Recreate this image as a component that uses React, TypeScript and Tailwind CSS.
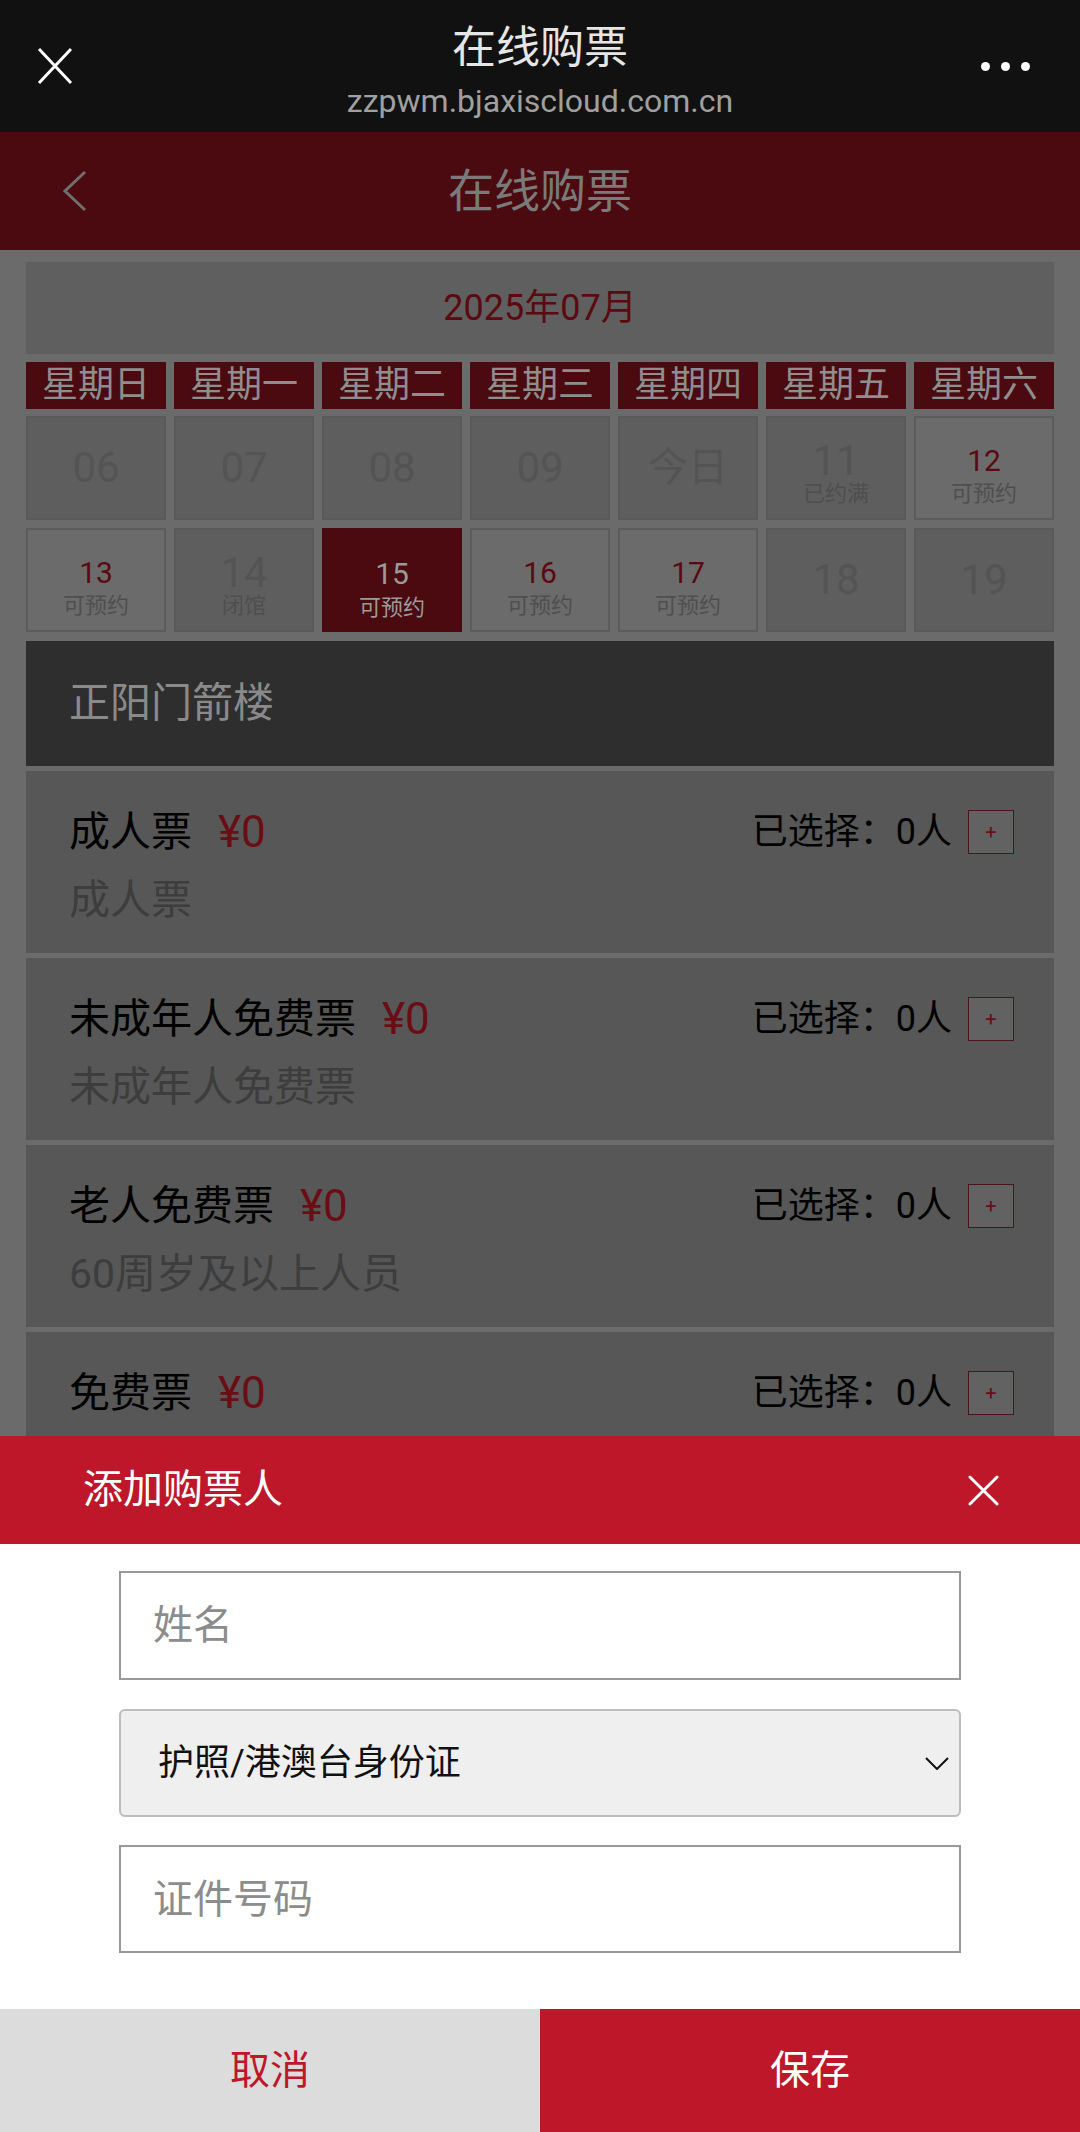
import { ChangeEvent, useState } from "react";

type DayCell = {
  day: string;
  label?: string;
  state: "off" | "open" | "selected";
};

const weekdays = ["星期日", "星期一", "星期二", "星期三", "星期四", "星期五", "星期六"];

const days: DayCell[] = [
  { day: "06", state: "off" },
  { day: "07", state: "off" },
  { day: "08", state: "off" },
  { day: "09", state: "off" },
  { day: "今日", state: "off" },
  { day: "11", label: "已约满", state: "off" },
  { day: "12", label: "可预约", state: "open" },
  { day: "13", label: "可预约", state: "open" },
  { day: "14", label: "闭馆", state: "off" },
  { day: "15", label: "可预约", state: "selected" },
  { day: "16", label: "可预约", state: "open" },
  { day: "17", label: "可预约", state: "open" },
  { day: "18", state: "off" },
  { day: "19", state: "off" },
];

// last row is cut by the sheet, its description never shows
const tickets = [
  { name: "成人票", price: "¥0", desc: "成人票" },
  { name: "未成年人免费票", price: "¥0", desc: "未成年人免费票" },
  { name: "老人免费票", price: "¥0", desc: "60周岁及以上人员" },
  { name: "免费票", price: "¥0", desc: "" },
];

function CloseIcon({ size, stroke }: { size: number; stroke: number }) {
  return (
    <svg width={size} height={size} viewBox="0 0 32 32" fill="none">
      <path d="M2 2L30 30M30 2L2 30" stroke="white" strokeWidth={stroke} strokeLinecap="round" />
    </svg>
  );
}

function DateCell({ cell }: { cell: DayCell }) {
  if (cell.state === "selected") {
    return (
      <div className="flex h-[104px] flex-col items-center bg-[#4b0a0f] pt-[31px]">
        <span className="text-[30px] leading-[30px] text-[#9a9a9a]">{cell.day}</span>
        <span className="mt-[8px] text-[22px] leading-[22px] text-[#9a9a9a]">{cell.label}</span>
      </div>
    );
  }

  if (cell.state === "open") {
    return (
      <div className="flex h-[104px] flex-col items-center border-2 border-[#5b5b5b] bg-[#6b6b6b] pt-[28px]">
        <span className="text-[30px] leading-[30px] text-[#5a0a10]">{cell.day}</span>
        <span className="mt-[7px] text-[22px] leading-[22px] text-[#4f4f4f]">{cell.label}</span>
      </div>
    );
  }

  if (cell.label) {
    return (
      <div className="flex h-[104px] flex-col items-center border-2 border-[#5a5a5a] bg-[#5e5e5e] pt-[22px]">
        <span className="text-[42px] leading-[42px] text-[#545454]">{cell.day}</span>
        <span className="mt-[1px] text-[22px] leading-[22px] text-[#4f4f4f]">{cell.label}</span>
      </div>
    );
  }

  return (
    <div className="flex h-[104px] items-center justify-center border-2 border-[#5a5a5a] bg-[#5e5e5e]">
      <span className={`${cell.day === "今日" ? "text-[40px]" : "text-[42px]"} leading-none text-[#545454]`}>
        {cell.day}
      </span>
    </div>
  );
}

export default function App() {
  const [name, setName] = useState("");
  const [idType, setIdType] = useState("passport");
  const [idNo, setIdNo] = useState("");

  return (
    <div className="relative h-[2132px] w-[1080px] overflow-hidden bg-[#6b6b6b] font-[Roboto,'Noto_Sans_CJK_SC',sans-serif]">
      {/* wechat title bar */}
      <div className="flex h-[132px] bg-[#111111]">
        <div className="flex w-[110px] items-center pl-[37px]">
          <svg width="36" height="38" viewBox="0 0 36 38" fill="none">
            <path d="M2 2L34 36M34 2L2 36" stroke="white" strokeWidth="3" />
          </svg>
        </div>
        <div className="flex flex-1 flex-col items-center pt-[22px]">
          <div className="text-[44px] leading-[52px] text-[#e6e6e6]">在线购票</div>
          <div className="mt-[9px] text-[32px] leading-[36px] text-[#a0a0a0]">zzpwm.bjaxiscloud.com.cn</div>
        </div>
        <div className="flex w-[110px] items-center justify-end gap-[11px] pr-[50px]">
          <span className="h-[9px] w-[9px] rounded-full bg-white" />
          <span className="h-[9px] w-[9px] rounded-full bg-white" />
          <span className="h-[9px] w-[9px] rounded-full bg-white" />
        </div>
      </div>

      {/* page header */}
      <div className="flex h-[118px] items-center bg-[#4b0a0f]">
        <div className="w-[110px] pl-[62px]">
          <svg width="25" height="42" viewBox="0 0 25 42" fill="none">
            <path d="M23 2L3 21L23 40" stroke="#6f6f6f" strokeWidth="3" />
          </svg>
        </div>
        <div className="flex-1 text-center text-[46px] text-[#7a7a7a]">在线购票</div>
        <div className="w-[110px]" />
      </div>

      <div className="px-[26px] pt-[12px]">
        <div className="flex h-[92px] items-center justify-center bg-[#5f5f5f] text-[36px] text-[#5a0a10]">
          2025年07月
        </div>

        <div className="mt-[8px] grid grid-cols-7 gap-[8px]">
          {weekdays.map((w) => (
            <div key={w} className="h-[47px] bg-[#4b0a0f] text-center text-[36px] leading-[47px] text-[#8e8e8e]">
              {w}
            </div>
          ))}
        </div>

        <div className="mt-[7px] grid grid-cols-7 gap-[8px]">
          {days.map((d) => (
            <DateCell key={d.day} cell={d} />
          ))}
        </div>

        <div className="mt-[9px] flex h-[125px] items-center bg-[#2e2e2e] pl-[43px] text-[41px] text-[#8a8a8a]">
          正阳门箭楼
        </div>

        {tickets.map((t) => (
          <div key={t.name} className="mt-[5px] h-[182px] bg-[#575757] pl-[43px] pr-[40px] pt-[39px]">
            <div className="flex h-[44px] items-center justify-between">
              <div className="flex items-center">
                <span className="text-[41px] leading-[44px] text-black">{t.name}</span>
                <span className="ml-[26px] text-[44px] leading-[44px] text-[#6b0d14]">{t.price}</span>
              </div>
              <div className="flex items-center">
                <span className="text-[36px] leading-[44px] text-black">已选择：0人</span>
                <span className="ml-[16px] flex h-[44px] w-[46px] items-center justify-center border-[1.5px] border-[#4a1519] bg-[#626262] text-[20px] leading-none text-[#6b0d14]">
                  +
                </span>
              </div>
            </div>
            {t.desc && <div className="mt-[24px] text-[41px] leading-[44px] text-[#3d3d3d]">{t.desc}</div>}
          </div>
        ))}
      </div>

      {/* add ticket holder sheet */}
      <div className="absolute bottom-0 left-0 right-0 flex h-[696px] flex-col bg-white">
        <div className="flex h-[108px] items-center justify-between bg-[#bd1729] pl-[83px] pr-[81px]">
          <span className="text-[40px] text-white">添加购票人</span>
          <CloseIcon size={31} stroke={3} />
        </div>

        <div className="flex flex-1 flex-col items-center pt-[27px]">
          <input
            value={name}
            onChange={(e: ChangeEvent<HTMLInputElement>) => setName(e.target.value)}
            placeholder="姓名"
            className="h-[109px] w-[842px] border-2 border-[#999999] px-[32px] text-[40px] text-black outline-none placeholder:text-[#8c8c8c]"
          />

          <div className="relative mt-[29px] h-[108px] w-[842px]">
            <select
              value={idType}
              onChange={(e) => setIdType(e.target.value)}
              className="h-full w-full appearance-none rounded-[6px] border-2 border-[#bdbdbd] bg-[#efefef] pl-[37px] text-[36px] text-[#111111] outline-none"
            >
              <option value="passport">护照/港澳台身份证</option>
              <option value="idcard">身份证</option>
            </select>
            <svg
              className="pointer-events-none absolute right-[12px] top-[48px]"
              width="24"
              height="13"
              viewBox="0 0 24 13"
              fill="none"
            >
              <path d="M1 1L12 12L23 1" stroke="#111111" strokeWidth="2" />
            </svg>
          </div>

          <input
            value={idNo}
            onChange={(e: ChangeEvent<HTMLInputElement>) => setIdNo(e.target.value)}
            placeholder="证件号码"
            className="mt-[28px] h-[108px] w-[842px] border-2 border-[#999999] px-[32px] text-[40px] text-black outline-none placeholder:text-[#8c8c8c]"
          />
        </div>

        <div className="flex h-[123px]">
          <button className="flex-1 bg-[#dcdcdc] text-[40px] text-[#bd1729]">取消</button>
          <button className="flex-1 bg-[#bd1729] text-[40px] text-white">保存</button>
        </div>
      </div>
    </div>
  );
}
